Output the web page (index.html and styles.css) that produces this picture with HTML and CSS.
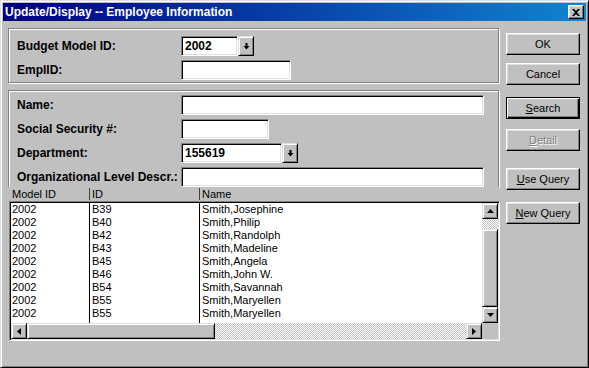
FILE: index.html
```html
<!DOCTYPE html>
<html lang="en">
<head>
    <meta charset="UTF-8">
    <title>Update/Display -- Employee Information</title>
    <link rel="stylesheet" href="styles.css">
</head>
<body>
    <div class="window">
        <div class="titlebar">
            <span class="title">Update/Display -- Employee Information</span>
            <span class="close">
                <svg width="8" height="7" viewBox="0 0 8 7"><path d="M0 0h2l2 2 2-2h2L5 3.5 8 7H6L4 5 2 7H0l3-3.5z" fill="#000"/></svg>
            </span>
        </div>
        <div class="body">
            <div class="main">
                <div class="group group-top">
                    <div class="row">
                        <span class="label">Budget Model ID:</span>
                        <div class="combo">
                            <div class="field w-budget">2002</div>
                            <span class="drop">
                                <svg width="7" height="7" viewBox="0 0 7 7"><rect x="2.5" y="0" width="2" height="3" fill="#000"/><path d="M0.5 3h6L3.5 6.5z" fill="#000"/></svg>
                            </span>
                        </div>
                    </div>
                    <div class="row">
                        <span class="label">EmplID:</span>
                        <div class="field w-empl"></div>
                    </div>
                </div>
                <div class="group group-search">
                    <div class="row">
                        <span class="label">Name:</span>
                        <div class="field w-wide"></div>
                    </div>
                    <div class="row">
                        <span class="label">Social Security #:</span>
                        <div class="field w-ssn"></div>
                    </div>
                    <div class="row">
                        <span class="label">Department:</span>
                        <div class="combo">
                            <div class="field w-dept">155619</div>
                            <span class="drop">
                                <svg width="7" height="7" viewBox="0 0 7 7"><rect x="2.5" y="0" width="2" height="3" fill="#000"/><path d="M0.5 3h6L3.5 6.5z" fill="#000"/></svg>
                            </span>
                        </div>
                    </div>
                    <div class="row">
                        <span class="label">Organizational Level Descr.:</span>
                        <div class="field w-wide"></div>
                    </div>
                </div>

                <div class="list-head">
                    <span class="hcell hcell-model">Model ID</span>
                    <span class="hcell hcell-id">ID</span>
                    <span class="hcell hcell-name">Name</span>
                </div>
                <div class="list">
                    <div class="rows">
                        <div class="col col-model">
                            <div>2002</div><div>2002</div><div>2002</div>
                            <div>2002</div><div>2002</div><div>2002</div>
                            <div>2002</div><div>2002</div><div>2002</div>
                        </div>
                        <div class="col col-id">
                            <div>B39</div><div>B40</div><div>B42</div>
                            <div>B43</div><div>B45</div><div>B46</div>
                            <div>B54</div><div>B55</div><div>B55</div>
                        </div>
                        <div class="col col-name">
                            <div>Smith,Josephine</div>
                            <div>Smith,Philip</div>
                            <div>Smith,Randolph</div>
                            <div>Smith,Madeline</div>
                            <div>Smith,Angela</div>
                            <div>Smith,John W.</div>
                            <div>Smith,Savannah</div>
                            <div>Smith,Maryellen</div>
                            <div>Smith,Maryellen</div>
                        </div>
                    </div>
                    <div class="vscroll">
                        <span class="sb-btn"><svg width="7" height="4" viewBox="0 0 7 4"><path d="M3.5 0L7 4H0z" fill="#000"/></svg></span>
                        <span class="sb-track sb-track-v"></span>
                        <span class="sb-thumb sb-thumb-v"></span>
                        <span class="sb-btn"><svg width="7" height="4" viewBox="0 0 7 4"><path d="M0 0h7L3.5 4z" fill="#000"/></svg></span>
                    </div>
                    <div class="hscroll">
                        <span class="sb-btn"><svg width="4" height="7" viewBox="0 0 4 7"><path d="M0 3.5L4 0v7z" fill="#000"/></svg></span>
                        <span class="sb-thumb sb-thumb-h"></span>
                        <span class="sb-track sb-track-h"></span>
                        <span class="sb-btn"><svg width="4" height="7" viewBox="0 0 4 7"><path d="M0 0l4 3.5L0 7z" fill="#000"/></svg></span>
                    </div>
                    <div class="corner"></div>
                </div>
            </div>

            <div class="actions">
                <button class="btn">OK</button>
                <button class="btn mt-8">Cancel</button>
                <button class="btn btn-default mt-12"><u>S</u>earch</button>
                <button class="btn btn-disabled mt-10"><u>D</u>etail</button>
                <button class="btn mt-17"><u>U</u>se Query</button>
                <button class="btn mt-12"><u>N</u>ew Query</button>
            </div>
        </div>
    </div>
</body>
</html>
```

FILE: styles.css
```css
body {
    margin: 0;
    background: #c0c0c0;
    font-family: "Liberation Sans", Arial, sans-serif;
}
.window {
    width: 589px;
    height: 368px;
    box-sizing: border-box;
    padding: 2px;
    background: #c0c0c0;
    border: 1px solid;
    border-color: #dfdfdf #000 #000 #dfdfdf;
    box-shadow: inset 1px 1px #fff, inset -1px -1px #808080;
    overflow: hidden;
}
.titlebar {
    height: 18px;
    display: flex;
    align-items: center;
    justify-content: space-between;
    padding: 0 2px 0 2px;
    background: linear-gradient(to right, #000080, #1084d0);
}
.title {
    color: #fff;
    font-weight: bold;
    font-size: 12px;
    white-space: nowrap;
}
.close {
    width: 16px;
    height: 14px;
    box-sizing: border-box;
    display: flex;
    align-items: center;
    justify-content: center;
    background: #c0c0c0;
    border: 1px solid;
    border-color: #fff #000 #000 #fff;
    box-shadow: inset -1px -1px #808080, inset 1px 1px #dfdfdf;
}

.body {
    display: flex;
    gap: 7px;
    padding: 7px 0 0 5px;
}
.main {
    width: 491px;
    display: flex;
    flex-direction: column;
}

/* etched group frames */
.group {
    border: 1px solid #808080;
    box-shadow: inset 1px 1px #fff, 1px 1px #fff;
    padding: 0 8px;
    display: flex;
    flex-direction: column;
    gap: 4px;
}
.group-top {
    padding-top: 7px;
    padding-bottom: 2px;
}
.group-search {
    margin-top: 7px;
    padding-top: 4px;
    border-bottom: none;
}
.row {
    display: flex;
    align-items: center;
    height: 20px;
}
.label {
    width: 164px;
    flex-shrink: 0;
    font-size: 12px;
    font-weight: bold;
    white-space: nowrap;
}
.field {
    height: 20px;
    box-sizing: border-box;
    background: #fff;
    border: 1px solid;
    border-color: #808080 #fff #fff #808080;
    box-shadow: inset 1px 1px #000, inset -1px -1px #dfdfdf;
    padding: 2px 0 0 3px;
    font-size: 12px;
    font-weight: bold;
    line-height: 15px;
}
.w-budget { width: 57px; }
.w-dept { width: 101px; }
.w-empl { width: 110px; }
.w-ssn { width: 88px; }
.w-wide { width: 303px; }

.combo {
    display: flex;
}
.drop,
.sb-btn,
.sb-thumb {
    box-sizing: border-box;
    background: #c0c0c0;
    border: 1px solid;
    border-color: #dfdfdf #000 #000 #dfdfdf;
    box-shadow: inset 1px 1px #fff, inset -1px -1px #808080;
}
.drop {
    width: 16px;
    height: 20px;
    display: flex;
    align-items: center;
    justify-content: center;
}

/* list */
.list-head {
    height: 14px;
    display: flex;
    align-items: center;
    font-size: 11px;
    background: #c0c0c0;
    position: relative;
}
.hcell {
    box-sizing: border-box;
    line-height: 12px;
}
.hcell-model {
    width: 81px;
    padding-left: 4px;
}
.hcell-id {
    width: 110px;
    padding-left: 2px;
    border-left: 1px solid #404040;
}
.hcell-name {
    padding-left: 2px;
    border-left: 1px solid #404040;
}
.list {
    width: 491px;
    margin-left: 1px;
    box-sizing: border-box;
    border: 1px solid;
    border-color: #808080 #fff #fff #808080;
    box-shadow: inset 1px 1px #000, inset -1px -1px #dfdfdf;
    padding: 1px;
    display: grid;
    grid-template-columns: 1fr 16px;
    grid-template-rows: 120px 16px;
}
.rows {
    display: flex;
    background: #fff;
    font-size: 11px;
    line-height: 13px;
}
.col {
    box-sizing: border-box;
    height: 120px;
}
.col-model {
    width: 79px;
    padding-left: 1px;
    border-right: 1px solid #000;
}
.col-id {
    width: 110px;
    padding-left: 2px;
    border-right: 1px solid #000;
}
.col-name {
    flex: 1;
    padding-left: 2px;
}
.vscroll,
.hscroll {
    display: flex;
}
.vscroll {
    flex-direction: column;
}
.sb-btn {
    width: 16px;
    height: 16px;
    flex-shrink: 0;
    display: flex;
    align-items: center;
    justify-content: center;
}
.sb-track {
    background-color: #fff;
    background-image: repeating-conic-gradient(#c0c0c0 0 25%, #fff 0 50%);
    background-size: 2px 2px;
}
.sb-track-v { height: 10px; }
.sb-thumb-v { height: 78px; }
.sb-thumb-h {
    width: 188px;
    flex-shrink: 0;
}
.sb-track-h { flex: 1; }
.corner {
    background: #c0c0c0;
}

/* buttons */
.actions {
    display: flex;
    flex-direction: column;
    padding-top: 5px;
}
.btn {
    width: 74px;
    height: 22px;
    box-sizing: border-box;
    padding: 0;
    background: #c0c0c0;
    border: 1px solid;
    border-color: #fff #000 #000 #fff;
    box-shadow: inset -1px -1px #808080, inset 1px 1px #dfdfdf;
    font-family: "Liberation Sans", Arial, sans-serif;
    font-size: 11px;
    color: #000;
}
.btn-default {
    border-color: #000;
    box-shadow: inset 1px 1px #fff, inset -1px -1px #000, inset -2px -2px #808080;
}
.btn-disabled {
    color: #808080;
    text-shadow: 1px 1px #fff;
}
.mt-8 { margin-top: 8px; }
.mt-10 { margin-top: 10px; }
.mt-12 { margin-top: 12px; }
.mt-17 { margin-top: 17px; }
```
